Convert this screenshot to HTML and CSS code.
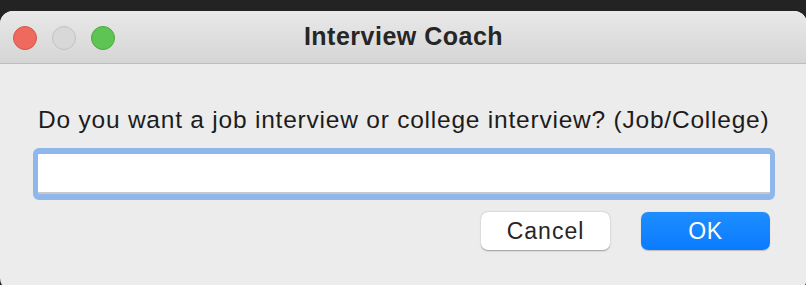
FILE: index.html
```html
<!DOCTYPE html>
<html>
<head>
<meta charset="utf-8">
<link rel="stylesheet" href="styles.css">
</head>
<body>
<div class="window">
  <div class="titlebar">
    <div class="lights">
      <span class="light red"></span>
      <span class="light gray"></span>
      <span class="light green"></span>
    </div>
    <div class="title">Interview Coach</div>
  </div>
  <div class="content">
    <div class="prompt">Do you want a job interview or college interview? (Job/College)</div>
    <div class="field"><div class="input"></div></div>
    <div class="buttons">
      <button class="btn cancel">Cancel</button>
      <button class="btn ok">OK</button>
    </div>
  </div>
</div>
</body>
</html>
```
FILE: styles.css
```css
html, body {
  margin: 0;
  padding: 0;
  background: #232323;
  width: 806px;
  height: 285px;
  overflow: hidden;
  font-family: "Liberation Sans", Arial, sans-serif;
}
.window {
  margin-top: 11px;
  width: 807px;
  height: 280px;
  border-radius: 13px;
  background: #ececec;
  overflow: hidden;
}
.titlebar {
  position: relative;
  height: 52px;
  background: linear-gradient(#e9e9e9, #d5d5d5);
  border-bottom: 1px solid #bdbdbd;
  display: flex;
  align-items: center;
  justify-content: center;
}
.lights {
  position: absolute;
  left: 13px;
  top: 15px;
  display: flex;
  gap: 15px;
}
.light {
  width: 24px;
  height: 24px;
  border-radius: 50%;
  box-sizing: border-box;
}
.red { background: #ee6a5e; border: 1px solid #d65549; }
.gray { background: #d8d8d8; border: 1px solid #c2c2c2; }
.green { background: #5ec453; border: 1px solid #4aa93f; }
.title {
  font-weight: bold;
  font-size: 25px;
  letter-spacing: 0.5px;
  color: #262626;
  margin-top: -2px;
}
.content {
  padding: 43px 31px 0 33px;
}
.prompt {
  font-size: 24.5px;
  letter-spacing: 0.78px;
  color: #1c1c1c;
  padding-left: 5px;
  line-height: 26px;
  white-space: nowrap;
}
.field {
  margin-top: 15px;
  height: 52px;
  border-radius: 6px;
  background: #90b7ec;
  padding: 6px 5px 6px 5px;
  box-sizing: border-box;
  width: 742px;
}
.input {
  height: 100%;
  background: #fff;
  border-bottom: 2px solid #c8c8c8;
  box-sizing: border-box;
  border-radius: 1px;
}
.buttons {
  margin-top: 12px;
  display: flex;
  justify-content: flex-end;
  gap: 31px;
  padding-right: 6px;
}
.btn {
  width: 129px;
  height: 38px;
  border-radius: 7px;
  border: none;
  font-family: "Liberation Sans", Arial, sans-serif;
  font-size: 23px;
  letter-spacing: 0.6px;
  padding: 0;
}
.cancel {
  background: #ffffff;
  color: #262626;
  letter-spacing: 1px;
  box-shadow: 0 0.5px 1.5px rgba(0,0,0,0.35);
}
.ok {
  background: linear-gradient(#1e8eff, #0a7bff);
  color: #ffffff;
  box-shadow: 0 0.5px 1px rgba(0,0,0,0.2);
}
```
